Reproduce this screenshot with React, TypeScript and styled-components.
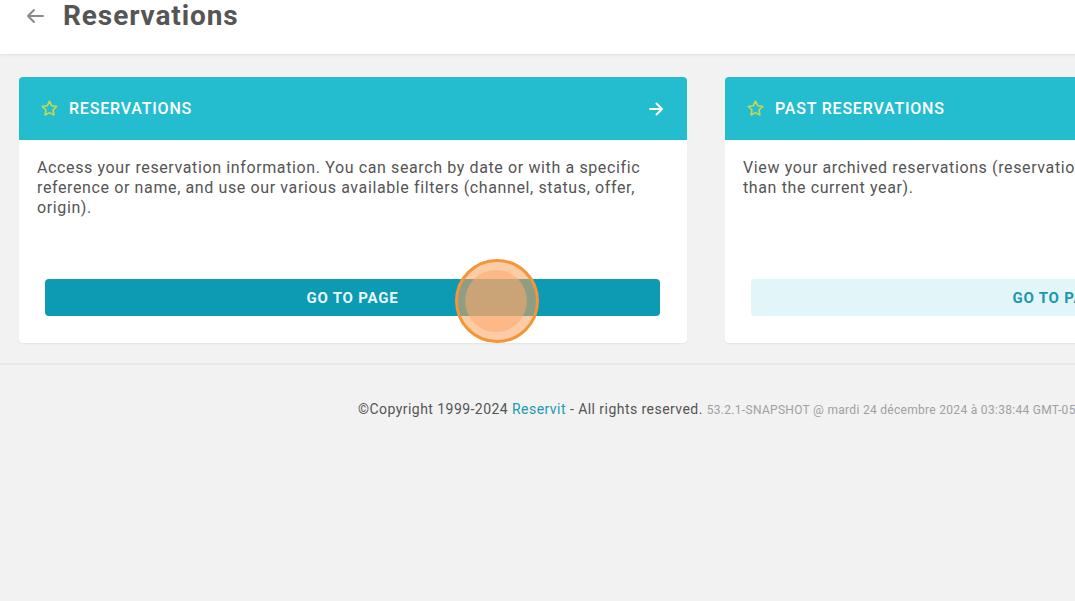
import React from "react";
import styled, { createGlobalStyle } from "styled-components";

const GlobalStyle = createGlobalStyle`
  html, body {
    margin: 0;
    padding: 0;
    background: #f2f2f2;
    font-family: Roboto, "Liberation Sans", Arial, sans-serif;
    overflow: hidden;
  }
  * { box-sizing: border-box; }
`;

const Page = styled.div`
  width: 1451px;
  min-height: 601px;
  background: #f2f2f2;
`;

const TopBar = styled.header`
  height: 54px;
  background: #ffffff;
  box-shadow: 0 1px 3px rgba(0, 0, 0, 0.08);
  display: flex;
  align-items: flex-start;
  gap: 19px;
  padding: 0 0 0 26px;
`;

const BackButton = styled.span`
  display: flex;
  align-items: center;
  height: 31px;
  color: #8a8a8a;
`;

const Title = styled.h1`
  margin: 0;
  font-size: 28px;
  line-height: 31px;
  font-weight: 700;
  color: #555555;
  letter-spacing: 0.9px;
`;

const CardGrid = styled.section`
  display: grid;
  grid-template-columns: 668px 668px;
  gap: 38px;
  padding: 23px 19px 20px;
`;

const Card = styled.article`
  background: #ffffff;
  border-radius: 4px;
  box-shadow: 0 1px 2px rgba(0, 0, 0, 0.06);
  overflow: hidden;
`;

const CardHeader = styled.div`
  height: 63px;
  background: #24bdd0;
  display: flex;
  align-items: center;
  gap: 10px;
  padding: 0 23px 0 21px;
  color: #ffffff;
`;

const CardTitle = styled.span`
  flex: 1;
  font-size: 16px;
  font-weight: 500;
  letter-spacing: 0.8px;
`;

const CardBody = styled.div`
  padding: 18px 18px 27px;
`;

const Description = styled.p`
  margin: 0;
  min-height: 121px;
  font-size: 16px;
  line-height: 20px;
  letter-spacing: 0.62px;
  color: #555555;
`;

const GoButton = styled.button<{ $variant: "solid" | "soft" }>`
  display: block;
  width: calc(100% - 17px);
  margin: 0 0 0 8px;
  height: 37px;
  border: none;
  border-radius: 4px;
  font-family: inherit;
  font-size: 15px;
  font-weight: 700;
  letter-spacing: 0.8px;
  background: ${(p) => (p.$variant === "solid" ? "#0d9ab3" : "#e2f5f8")};
  color: ${(p) => (p.$variant === "solid" ? "#e9f7fa" : "#1b98ad")};
  position: relative;
  cursor: pointer;
`;

/* click marker drawn over the button */
const ClickRing = styled.span`
  position: absolute;
  left: 410px;
  top: -20px;
  width: 84px;
  height: 84px;
  border-radius: 50%;
  border: 3px solid #f39539;
  background: rgba(252, 160, 90, 0.55);
  display: flex;
  align-items: center;
  justify-content: center;
`;

const ClickCore = styled.span`
  width: 62px;
  height: 62px;
  border-radius: 50%;
  background: rgba(252, 170, 110, 0.55);
  margin-left: -2px;
`;

const Footer = styled.footer`
  border-top: 2px solid #ebebeb;
  padding: 36px 0 0;
  text-align: center;
  font-size: 14px;
  letter-spacing: 0.45px;
  color: #555555;
`;

const FooterLink = styled.a`
  color: #1a9aae;
  text-decoration: none;
`;

const Version = styled.span`
  font-size: 12px;
  letter-spacing: 0.3px;
  color: #a0a0a0;
`;

const Star = () => (
  <svg width="19" height="19" viewBox="0 0 24 24" fill="none" stroke="#c9d94a" strokeWidth="2" strokeLinejoin="round">
    <path d="M12 2.8l2.8 5.8 6.3.9-4.6 4.4 1.1 6.3L12 17.2l-5.6 3 1.1-6.3L2.9 9.5l6.3-.9z" />
  </svg>
);

const ArrowRight = () => (
  <svg width="16" height="16" viewBox="0 0 16 16" fill="none" stroke="#ffffff" strokeWidth="2" strokeLinecap="round" strokeLinejoin="round">
    <path d="M2 8h12M8.5 2.5L14 8l-5.5 5.5" />
  </svg>
);

const ArrowLeft = () => (
  <svg width="18" height="16" viewBox="0 0 18 16" fill="none" stroke="#8a8a8a" strokeWidth="2" strokeLinecap="round" strokeLinejoin="round">
    <path d="M17 8H2M8 2L2 8l6 6" />
  </svg>
);

export default function App() {
  return (
    <Page>
      <GlobalStyle />
      <TopBar>
        <BackButton>
          <ArrowLeft />
        </BackButton>
        <Title>Reservations</Title>
      </TopBar>

      <CardGrid>
        <Card>
          <CardHeader>
            <Star />
            <CardTitle>RESERVATIONS</CardTitle>
            <ArrowRight />
          </CardHeader>
          <CardBody>
            <Description>
              Access your reservation information. You can search by date or with a specific
              reference or name, and use our various available filters (channel, status, offer,
              origin).
            </Description>
            <GoButton $variant="solid">
              GO TO PAGE
              <ClickRing>
                <ClickCore />
              </ClickRing>
            </GoButton>
          </CardBody>
        </Card>

        <Card>
          <CardHeader>
            <Star />
            <CardTitle>PAST RESERVATIONS</CardTitle>
            <ArrowRight />
          </CardHeader>
          <CardBody>
            <Description>
              View your archived reservations (reservations whose departure date is earlier
              than the current year).
            </Description>
            <GoButton $variant="soft">GO TO PAGE</GoButton>
          </CardBody>
        </Card>
      </CardGrid>

      <Footer>
        ©Copyright 1999-2024 <FooterLink href="#">Reservit</FooterLink> - All rights reserved.{" "}
        <Version>53.2.1-SNAPSHOT @ mardi 24 décembre 2024 à 03:38:44 GMT-05:00</Version>
      </Footer>
    </Page>
  );
}
